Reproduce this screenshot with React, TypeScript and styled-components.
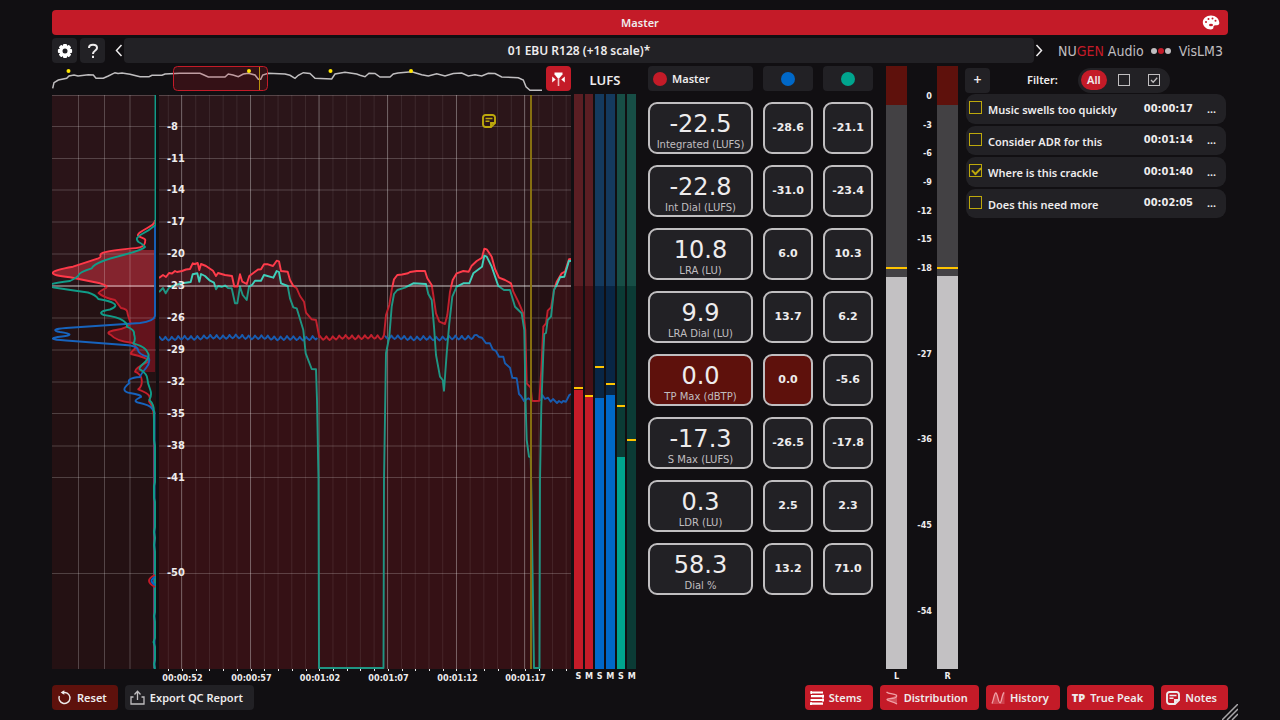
import React from 'react';
import styled, { createGlobalStyle } from 'styled-components';

const c = {
  bg: '#110f12',
  panel: '#222125',
  red: '#c41b28',
  darkRed: '#5e110c',
  blue: '#0068c8',
  green: '#00a58e',
  text: '#eeeced',
  soft: '#c0bec0',
  yellow: '#ffc400',
  olive: '#bda80c',
};

const digits = "'DejaVu Sans Condensed', 'DejaVu Sans', sans-serif";
const wideDigits = "'DejaVu Sans', sans-serif";

const GlobalStyle = createGlobalStyle`
  * { box-sizing: border-box; }
  body {
    margin: 0;
    background: ${c.bg};
    color: ${c.text};
    font-family: 'Noto Sans', 'Open Sans', sans-serif;
    font-size: 11px;
    line-height: 16px;
    font-weight: 600;
  }
  button, input { font: inherit; color: inherit; margin: 0; }
  svg { display: block; }
`;

const Page = styled.main`
  position: relative;
  display: flex;
  flex-direction: column;
  gap: 3px;
  min-height: 100vh;
  padding: 10px 52px;
`;

const MasterBar = styled.header`
  display: grid;
  grid-template-columns: 1fr auto 1fr;
  align-items: center;
  height: 25px;
  padding: 0 8px;
  border-radius: 4px;
  background: ${c.red};
`;

const Title = styled.h1`
  grid-column: 2;
  margin: 0;
  font-size: 11px;
  line-height: 16px;
  font-weight: 600;
`;

const PlainButton = styled.button`
  display: flex;
  align-items: center;
  justify-content: center;
  padding: 0;
  border: 0;
  background: none;
`;

const PaletteButton = styled(PlainButton)`
  justify-self: end;
`;

const Toolbar = styled.nav`
  display: flex;
  align-items: center;
  height: 25px;
`;

const SquareButton = styled(PlainButton)<{ $color?: string }>`
  flex: none;
  width: 25px;
  height: 25px;
  border-radius: 4px;
  background: ${(p) => p.$color ?? c.panel};
  font-size: 14px;
`;

const ToolGroup = styled.div`
  display: flex;
  gap: 3px;
  margin-right: 9px;
`;

const ArrowButton = styled(PlainButton)`
  width: 10px;
  height: 25px;
`;

const PresetButton = styled(PlainButton)`
  flex: 1;
  height: 25px;
  border-radius: 4px;
  background: ${c.panel};
  font-size: 12px;
`;

const Brand = styled.div`
  display: flex;
  align-items: center;
  justify-content: space-between;
  width: 184px;
  padding: 0 5px 0 14px;
  color: ${c.soft};
  font-family: ${digits};
  font-size: 14px;
  font-weight: 400;
  white-space: nowrap;

  b { color: ${c.red}; font-weight: 400; }
`;

const BrandDots = styled.span`
  display: flex;
  gap: 1px;
`;

const Body = styled.div`
  flex: 1;
  display: flex;
  min-height: 618px;
`;

const Visuals = styled.section`
  flex: 1;
  display: grid;
  grid-template-columns: 104px 1fr;
  grid-template-rows: 25px 1fr 15px;
  column-gap: 3px;
  min-width: 0;
`;

const OverviewRow = styled.div`
  grid-column: 1 / -1;
  display: flex;
  gap: 4px;
  min-width: 0;
`;

const Overview = styled.div`
  flex: 1;
  min-width: 0;
  svg { width: 100%; height: 25px; }
`;

const Plot = styled.div`
  position: relative;
  min-height: 0;
  margin-top: 4px;
  > svg { position: absolute; inset: 0; width: 100%; height: 100%; }
`;

const LevelLabel = styled.span`
  position: absolute;
  left: 8px;
  transform: translateY(-50%);
  font-family: ${digits};
  font-weight: 700;
`;

const NoteMarker = styled(PlainButton)`
  position: absolute;
  left: 78.5%;
  top: 3.3%;
  color: ${c.olive};
`;

const TimeAxis = styled.div`
  grid-column: 2;
  position: relative;
  font-family: ${digits};
  font-size: 9px;
  font-weight: 700;
`;

const Tick = styled.i`
  position: absolute;
  top: 0;
  width: 1px;
  height: 2px;
  background: ${c.text};
`;

const TimeLabel = styled.span`
  position: absolute;
  top: 1px;
  transform: translateX(-50%);
`;

const LoudnessMeter = styled.section`
  display: grid;
  grid-template-rows: 28px 1fr 15px;
  width: 62px;
  margin-left: 3px;
`;

const MeterTitle = styled.h2`
  margin: 0;
  padding-top: 5px;
  text-align: center;
  font-size: 13px;
  line-height: 18px;
  font-weight: 600;
`;

const LoudnessBars = styled.div`
  display: grid;
  grid-template-columns: repeat(6, 1fr);
  column-gap: 2px;
`;

const Bar = styled.div<{ $top: string; $low: string }>`
  position: relative;
  background: linear-gradient(${(p) => p.$top} 0 33.4%, ${(p) => p.$low} 33.4%);
`;

const Fill = styled.div<{ $color: string }>`
  position: absolute;
  left: 0;
  right: 0;
  bottom: 0;
  background: ${(p) => p.$color};
`;

const Peak = styled.div`
  position: absolute;
  left: 0;
  right: 0;
  height: 2px;
  background: ${c.yellow};
`;

const BarNames = styled(LoudnessBars)`
  font-family: ${digits};
  font-size: 9px;
  line-height: 15px;
  font-weight: 700;
  text-align: center;
`;

const Readouts = styled.section`
  display: grid;
  grid-template-columns: 105px 50px 50px;
  grid-template-rows: 25px;
  grid-auto-rows: 52px;
  gap: 11px 10px;
  align-content: start;
  margin-left: 12px;
`;

const StemButton = styled.button<{ $wide?: boolean }>`
  display: flex;
  align-items: center;
  justify-content: ${(p) => (p.$wide ? 'flex-start' : 'center')};
  gap: 5px;
  padding: 0 5px;
  border: 0;
  border-radius: 4px;
  background: ${c.panel};
`;

const Dot = styled.i<{ $color: string; $size: number }>`
  width: ${(p) => p.$size}px;
  height: ${(p) => p.$size}px;
  border-radius: 50%;
  background: ${(p) => p.$color};
`;

const Cell = styled.div<{ $alert?: boolean }>`
  display: flex;
  flex-direction: column;
  align-items: center;
  justify-content: center;
  border: 2px solid ${c.soft};
  border-radius: 9px;
  background: ${(p) => (p.$alert ? c.darkRed : c.panel)};
  font-family: ${wideDigits};
  font-weight: 700;
`;

const MainCell = styled(Cell)`
  padding-top: 5px;
  font-weight: 400;
`;

const BigValue = styled.strong`
  font-size: 24px;
  line-height: 28px;
  font-weight: 400;
`;

const Caption = styled.span`
  color: ${c.soft};
  font-size: 10px;
  line-height: 14px;
`;

const PeakMeter = styled.section`
  display: grid;
  grid-template-columns: 21px 1fr 21px;
  grid-template-rows: 1fr 15px;
  width: 72px;
  margin-left: 13px;
  font-family: ${digits};
  font-size: 9px;
  line-height: 15px;
  font-weight: 700;
  text-align: center;
`;

const PeakBar = styled.div`
  position: relative;
  background: linear-gradient(${c.darkRed} 0 39px, #434144 39px);
`;

const PeakScale = styled.div`
  position: relative;
`;

const PeakLabel = styled.span`
  position: absolute;
  right: 5px;
  transform: translateY(-50%);
`;

const Notes = styled.section`
  width: 263px;
  margin-left: 7px;
`;

const NotesHead = styled.div`
  display: flex;
  align-items: center;
  height: 28px;
`;

const FilterLabel = styled.span`
  margin: 0 20px 0 37px;
`;

const FilterGroup = styled.div`
  display: flex;
  align-items: center;
  gap: 4px;
  width: 92px;
  height: 25px;
  padding: 0 3px;
  border-radius: 13px;
  background: ${c.panel};
`;

const FilterButton = styled(PlainButton)<{ $active?: boolean }>`
  width: 26px;
  height: 20px;
  border-radius: 10px;
  color: ${(p) => (p.$active ? c.text : c.soft)};
  background: ${(p) => (p.$active ? c.red : 'none')};
`;

const NoteList = styled.ul`
  display: grid;
  grid-auto-rows: 1fr;
  gap: 2px;
  height: 124px;
  margin: 0 2px 0 1px;
  padding: 0;
  list-style: none;
`;

const NoteRow = styled.li`
  display: flex;
  align-items: center;
  padding: 0 10px 0 3px;
  border-radius: 9px;
  background: ${c.panel};
`;

const NoteName = styled.label`
  flex: 1;
  display: flex;
  align-items: flex-end;
  gap: 6px;
  span { line-height: 12px; }
`;

const NoteTime = styled.time`
  font-family: ${digits};
  font-weight: 700;
`;

const Check = styled.input`
  position: relative;
  appearance: none;
  width: 13px;
  height: 13px;
  margin-bottom: 2px;
  border: 1px solid ${c.olive};

  &:checked::after {
    content: '';
    position: absolute;
    left: 2px;
    top: 2px;
    width: 7px;
    height: 4px;
    border: solid ${c.olive};
    border-width: 0 0 2px 2px;
    transform: rotate(-45deg);
  }
`;

const MoreButton = styled(PlainButton)`
  width: 9px;
  margin-left: 14px;
`;

const Footer = styled.footer`
  display: flex;
  align-items: center;
  gap: 7px;
  height: 25px;
  margin-top: -2px;
`;

const ActionButton = styled.button<{ $color: string }>`
  display: flex;
  align-items: center;
  gap: 5px;
  height: 25px;
  padding: 0 11px 0 5px;
  border: 0;
  border-radius: 4px;
  background: ${(p) => p.$color};
`;

const Spacer = styled.div`
  flex: 1;
`;

const Grip = styled.svg`
  position: absolute;
  right: 42px;
  bottom: 0;
`;

const levels: [number, number][] = [
  [-8, 126.5], [-11, 158.5], [-14, 190], [-17, 222], [-20, 254], [-23, 286],
  [-26, 318], [-29, 350], [-32, 382], [-35, 413.5], [-38, 446], [-41, 477.5], [-50, 573.5],
];

const ripple = (from: number, to: number, y: number) => {
  const pts: string[] = [];
  for (let x = from, i = 0; x < to; x += 1.6, i += 1) {
    const drift = Math.sin(x / 21) * 0.8 + Math.sin(x / 4.3) * 0.4;
    const wave = [-2, 0.2, 1.6, 0.4][i % 4];
    pts.push(`${x.toFixed(1)},${(y + drift + wave).toFixed(1)}`);
  }
  return pts.join(' ');
};

const redA =
  '159,278 163,275 166,277 169,273 172,273.500 175,271 177,272 182,271 186,269.500 190,269 192.700,263.300 195,264 197.700,263 199.300,270 201,264 206,266 213,270.700 216,276 218,273 225,275 232,276 234.300,286.700 237.300,286.700 240,274.300 242.300,281.700 246.700,284 249.300,276 252,274 255,271.700 258,269.500 261,269.300 264,264.300 268,264.300 273,266 276.700,260.700 279,261.300 281,271 287.700,271.700 290,280 293.300,286 296.700,288.300 300,296 304,301.700 306,312.700 311.700,319.300 316,320 319.300,337';
const redB =
  '384,335 386,315 389.300,305 391.700,290 394,279.300 397.300,275 402,274.500 408,273.300 410,272 416.700,271 425,271 427.300,278.300 431.700,285 433.300,295 436,313.300 439.300,321.700 445,324 447.300,315 450,291.700 452.700,280 456.700,273.300 463.300,271 468.700,271.700 471.700,265.700 476.700,261 482,257.700 484.300,248.700 486.700,249.300 491.700,256.700 495,269 499,277.700 505,280 511,283.300 513.300,291.700 518.300,301.700 523.300,313.300 525.300,330 526.700,383.300 530.700,387.700 532,400.700 535,401 539.300,400.700 541.300,370 543.300,326.700 546,323.300 547.700,310.700 551,307.300 554,290 556.700,281.700 561.700,273.300 565,271.700 569,259.300 571,259';
const redLine = `${redA} ${ripple(320, 383, 338)} ${redB}`;
const greenLine =
  '159,292 163,288 165.700,293.300 169,287.700 175,285 182,283.300 190.700,282 192.700,274.300 197.300,273.300 199.300,281.700 201,274 205,276 210,280.700 214,282.700 216,289.300 218.300,286 222,287 225,285.500 228,288 231.700,288.300 235,303.300 237.300,303.300 240,286.700 242.700,295 246.700,300 249,286.700 252,285 255,280.700 261,280.700 264,275 273.300,277.700 276.700,271 279,272 281,283.300 287.700,286 290,298.300 293.300,307.300 296.700,308.300 300,319 303.300,330 305.700,353.300 311.700,369 316,369.300 317,400 318.500,480 319,668 383.500,668 384,480 386,353.300 389.300,336.700 391.700,306.700 394,294 397.300,290 405,287.700 413.300,283.300 426,284 428.300,294 431.700,300 434,326.700 436,355 440,376.700 442.700,380 444,390.700 446.700,353.300 449.300,323.300 452.300,296.700 456.700,286.700 463.300,283.300 469.300,283.300 473.300,273.300 482,266.700 484.300,255.700 486.700,256.700 491.700,266.700 498.300,286 504,290 510,290 515,306.700 521.700,313.300 524.300,330 525.700,406.700 526.700,440 529,456.700 530.700,457.300 531.500,500 534,668 539.500,668 540,480 541.300,406.700 543.300,353 544.300,334 546,333 547.700,320 551,316.700 554,290 556.700,285 560,277.300 564.300,276.700 569,260.700 571,261';
const blueA = ripple(159, 319, 337.7);
const blueB = `${ripple(385, 476, 337.7)} 476.700,335 479,337 482,337.700 486,343.300 490,343.300 492.700,349.300 496,351 499,356.700 503.300,356.700 505,363.300 510,367.700 512.300,377.700 516.700,378.300 519,394 521,396 524,401 528.300,398.300 531.700,400.700`;
const blueC = '541,401 542.300,395 545,399 548,397.700 550.700,401.700 553,399 555,401 557,403 559,401 561.700,402.700 563,401 566,401.700 569.300,395 571,394';

const distRed =
  'M155 220C155 225 150 226 141 231.700S145.300 237 145.300 240S145 246 140 247.300S110 250 103.300 252.700S104 256 98.300 258.300L73 266.700Q34 273.500 70 277.300L100 283.300Q110 286 105 288.500T98.500 293Q104 298 115 300Q118 304 121 308Q127 309 127.300 312T130.700 323.300Q128 328 116 330T111 335Q116 341 131.700 342.700Q138 346 134 349.500T131 354Q149 358 148.300 361.700S135 368 135 371.700Q141 374 141.700 380T138.300 389.300Q148 393 149.300 396T149 401.700Q154 407 154 420V668';
const distGreen =
  'M155.500 95V225Q150 230 142 234T138.500 242Q144 245 145 247Q142 250 125 254.500T103 261Q93 265 91.700 268.300Q80 272 79 274.500T70 281Q38 285 54 287.500T88 292.500Q96 295 98.300 299Q110 301 113 303Q119 306 110 309.500Q96 312 104 315Q118 317 123.300 320.700Q128 324 126.700 326.700Q135 330 134 334Q136 340 133.300 343.300Q146 347 147.300 352Q151 357 144 363T141 370Q147 374 147.300 378.500T150 389T149.300 400Q154 404 154 412L154 440L155 446V482L154 486V498L155 502V527L154 532L155 538L154 545L155 552V612L154 616L155 622V638L153.500 642L155 647V660L154 664L155 669';
const distBlue =
  'M155 226V316Q154 321 140 323L66 328Q48 329.500 60 332Q78 334.500 62 336.500Q42 339 66 340.500L125 345Q138 346 138 350T148.300 357Q151 362 146 368T140 377Q126 378 129.500 383Q119 391 130 393Q142 395 141 397Q132 401 138 402.500Q150 405 152 408.500L154.500 412V669';

const overviewLine =
  '52.700,88.300 54,82.700 58.300,80 66.700,78.300 69,76 74,75 78,76 88.300,74.700 93.300,75 96,78.300 103.300,78.300 108.300,76 115,72.700 118,73.500 122,73 130,74.300 140,76.700 149,76.700 152,75.300 162,75.300 165,74 180,73.300 200,73.300 204,75 208.300,77 225,77 228.300,74 233,75 238.300,76.700 243.300,74 248.300,73.300 255,75 258.300,79.300 260.700,79.300 262.700,75 268.300,73.300 285,74 290,75.300 295,78.300 298.300,75.300 303.300,72.700 310,73.500 315,78.300 331.700,79 335,74 345,72.300 356.700,74 360,75.300 365,76.700 369,73.300 375,73.500 380,77 390,77 393.300,74 398,73 411.700,71.700 421.700,74.700 428.300,76 436.700,73.700 445,76 453.300,73.500 461.700,73 468.300,76 475,74.700 481.700,76 488.300,73.300 495,73.500 501.700,77 518.300,77.700 523.300,80 526,86.700 530,90.300 542.700,90.300';

const majors = [181.5, 250.5, 319, 387.5, 456.5, 524.5];
const ticks = Array.from({ length: 30 }, (_, i) => 168.3 + i * 13.72);

const times = ['00:00:52', '00:00:57', '00:01:02', '00:01:07', '00:01:12', '00:01:17'];

const meters = [
  { name: 'S', top: '#5a1e23', low: '#451116', color: c.red, fill: 390, peak: 388 },
  { name: 'M', top: '#5a1e23', low: '#451116', color: c.red, fill: 396, peak: 396 },
  { name: 'S', top: '#143a5e', low: '#092645', color: c.blue, fill: 398, peak: 368 },
  { name: 'M', top: '#143a5e', low: '#092645', color: c.blue, fill: 395, peak: 384 },
  { name: 'S', top: '#174e46', low: '#0b3b35', color: c.green, fill: 457, peak: 406 },
  { name: 'M', top: '#174e46', low: '#0b3b35', color: c.green, fill: 669, peak: 440 },
];

const readouts = [
  { value: '-22.5', name: 'Integrated (LUFS)', a: '-28.6', b: '-21.1' },
  { value: '-22.8', name: 'Int Dial (LUFS)', a: '-31.0', b: '-23.4' },
  { value: '10.8', name: 'LRA (LU)', a: '6.0', b: '10.3' },
  { value: '9.9', name: 'LRA Dial (LU)', a: '13.7', b: '6.2' },
  { value: '0.0', name: 'TP Max (dBTP)', a: '0.0', b: '-5.6', alert: true },
  { value: '-17.3', name: 'S Max (LUFS)', a: '-26.5', b: '-17.8' },
  { value: '0.3', name: 'LDR (LU)', a: '2.5', b: '2.3' },
  { value: '58.3', name: 'Dial %', a: '13.2', b: '71.0' },
];

const peakScale = [0, -3, -6, -9, -12, -15, -18, -27, -36, -45, -54];

const notes = [
  { text: 'Music swells too quickly', time: '00:00:17', done: false },
  { text: 'Consider ADR for this', time: '00:01:14', done: false },
  { text: 'Where is this crackle', time: '00:01:40', done: true },
  { text: 'Does this need more', time: '00:02:05', done: false },
];

const pct = (y: number) => `${((y - 95) / 574) * 100}%`;
const across = (x: number) => `${((x - 159) / 412) * 100}%`;

const NoteIcon = ({ size = 14 }: { size?: number }) => (
  <svg width={size} height={size} viewBox="0 0 14 14" fill="none" stroke="currentColor" strokeWidth="1.900">
    <path d="M9 13H3.500A2.500 2.500 0 0 1 1 10.500V3.500A2.500 2.500 0 0 1 3.500 1H10.500A2.500 2.500 0 0 1 13 3.500V9L9 13V9H13" />
    <path d="M3.500 4.500H10.500M3.500 7.300H7.500" strokeWidth="1.400" />
  </svg>
);

const GearIcon = () => (
  <svg width="16" height="16" viewBox="0 0 16 16">
    <g fill="#fff">
      {[0, 45, 90, 135].map((a) => (
        <rect key={a} x="6" y="0.900" width="4" height="14.200" rx="1" transform={`rotate(${a} 8 8)`} />
      ))}
      <circle cx="8" cy="8" r="5.700" />
    </g>
    <circle cx="8" cy="8" r="2.500" fill={c.panel} />
  </svg>
);

const PaletteIcon = () => (
  <svg width="18" height="15" viewBox="0 0 18 15">
    <path fill="#fff" d="M9 .5C4.300.500.800 3.500.800 7.300c0 4 3.600 7.200 8 7.200 1.900 0 2.700-.8 2.600-1.900-.1-1.500.7-2.300 2.100-2.300h1.600c1.500 0 2.300-.9 2.200-2.500C17 3.500 13.600.500 9 .5z" />
    <g fill={c.red}>
      <circle cx="4" cy="7" r="1" />
      <circle cx="6.500" cy="4" r="1" />
      <circle cx="10.500" cy="3.500" r="1" />
      <circle cx="13.500" cy="5.800" r="1" />
      <ellipse cx="9" cy="10" rx="2" ry="1.200" />
    </g>
  </svg>
);

const Chevron = ({ right }: { right?: boolean }) => (
  <svg width="8" height="13" viewBox="0 0 8 13" fill="none" stroke={c.text} strokeWidth="1.500">
    <path d={right ? 'M1.500 1L6.500 6.500L1.500 12' : 'M6.500 1L1.500 6.500L6.500 12'} />
  </svg>
);

const BoxIcon = ({ checked }: { checked?: boolean }) => (
  <svg width="12" height="12" viewBox="0 0 12 12" fill="none" stroke="currentColor">
    <rect x="0.500" y="0.500" width="11" height="11" />
    {checked && <path d="M3 6L5.200 8.200L9.200 3.800" strokeWidth="1.300" />}
  </svg>
);

const LineSplit = ({ id, top, low }: { id: string; top: string; low: string }) => (
  <linearGradient id={id} gradientUnits="userSpaceOnUse" x1="0" x2="0" y1="95" y2="669">
    <stop offset="0.334" stopColor={top} />
    <stop offset="0.334" stopColor={low} />
  </linearGradient>
);

const GridLines = ({ from, to }: { from: number; to: number }) => (
  <g stroke="#fff">
    <path d={`M${from} 95.500H${to}`} opacity="0.200" />
    {levels.map(([v, y]) => (
      <path
        key={v}
        d={`M${from} ${y}H${to}`}
        opacity={v === -23 ? 0.5 : 0.2}
        strokeWidth={v === -23 ? 1.5 : 1.2}
      />
    ))}
  </g>
);

const Distribution = () => (
  <svg viewBox="52 95 104 574" preserveAspectRatio="none" role="img" aria-label="Loudness distribution">
    <defs>
      <LineSplit id="dr" top="#ff3848" low="#c41f2c" />
      <LineSplit id="dfill" top="#84242e" low="#63131c" />
      <clipPath id="range"><rect x="52" y="250" width="104" height="122" /></clipPath>
    </defs>
    <rect x="52" y="95" width="104" height="191" fill="#2a1418" />
    <rect x="52" y="286" width="104" height="383" fill="#241113" />
    <path d={`${distRed}H155V220Z`} fill="url(#dfill)" clipPath="url(#range)" />
    <GridLines from={52} to={156} />
    <path d="M78.500 95V669M104.500 95V669M130 95V669" stroke="#fff" opacity="0.220" />
    <g fill="none" strokeWidth="1.900" strokeLinejoin="round">
      <path d={distRed} stroke="url(#dr)" />
      <path d={distBlue} stroke="#1763bd" />
      <path d={distGreen} stroke="#109c88" />
      <path d="M155 575Q143 580.500 155 587" stroke={c.red} />
      <path d="M155 577Q148 580.500 155 585" stroke={c.blue} />
    </g>
  </svg>
);

const History = () => (
  <svg viewBox="159 95 412 574" preserveAspectRatio="none" role="img" aria-label="Loudness history">
    <defs>
      <LineSplit id="hr" top="#ff3b4a" low="#c1202d" />
      <LineSplit id="hg" top="#3fcfba" low="#1f9583" />
      <LineSplit id="hfill" top="#42171e" low="#351115" />
    </defs>
    <rect x="159" y="95" width="412" height="191" fill="#2b1519" />
    <rect x="159" y="286" width="412" height="383" fill="#231013" />
    <polygon points={`${redLine} 571,669 159,669`} fill="url(#hfill)" />
    <GridLines from={159} to={571} />
    <g stroke="#fff">
      {ticks.map((x) => <path key={x} d={`M${x} 95V669`} opacity="0.080" />)}
      {majors.map((x) => <path key={x} d={`M${x} 95V669`} opacity="0.280" />)}
    </g>
    <g fill="none" strokeWidth="1.900" strokeLinejoin="round">
      <polyline points={blueA} stroke="#185cb0" />
      <polyline points={blueB} stroke="#185cb0" />
      <polyline points={blueC} stroke="#185cb0" />
      <polyline points={redLine} stroke="url(#hr)" />
      <polyline points={greenLine} stroke="url(#hg)" />
    </g>
    <path d="M531 95V669" stroke="#8b7410" strokeWidth="1.900" />
  </svg>
);

const Timeline = () => (
  <svg viewBox="52 66 490 25" preserveAspectRatio="none" role="img" aria-label="Programme overview">
    <polyline points={overviewLine} fill="none" stroke="#c0bec0" strokeWidth="1.500" />
    <rect x="173.500" y="66.500" width="94" height="24" rx="4" fill="#c41b28" fillOpacity="0.200" stroke={c.red} />
    <path d="M259.500 67V90" stroke="#b9920c" />
    {[68.5, 249, 330.5, 411].map((x) => <circle key={x} cx={x} cy="71" r="2" fill="#ffe600" />)}
  </svg>
);

const ResetIcon = () => (
  <svg width="15" height="15" viewBox="0 0 15 15" fill="none" stroke={c.text} strokeWidth="1.400">
    <path d="M5 2.500H8A5.500 5.500 0 1 1 2.300 6" />
    <path d="M7.300.3L3.600 2.500L7.300 4.700Z" fill={c.text} stroke="none" />
  </svg>
);

const ExportIcon = () => (
  <svg width="15" height="15" viewBox="0 0 15 15" fill="none" stroke={c.soft} strokeWidth="1.300">
    <path d="M3.500 7H1V14H14V7H11.500M7.500 10V1.500M4.500 4.500L7.500 1.300L10.500 4.500" />
  </svg>
);

const StemsIcon = () => (
  <svg width="14" height="14" viewBox="0 0 14 14" stroke="#fff" strokeWidth="2.200">
    <path d="M.5 1.500H13M1 5.200H13M.5 9H13M1 12.700H13" />
    <path d="M.5 1.500H2M12 5.200H14M12 9H14M0 12.700H2" strokeWidth="3" />
  </svg>
);

const DistributionIcon = () => (
  <svg width="14" height="14" viewBox="0 0 14 14" fill="none" stroke="#f0a0a6" strokeWidth="1.300">
    <path d="M12 1C13.500 6 2 7 2 8.500S9 11 12 13.500Z" fill="#dc6972" stroke="none" opacity="0.700" />
    <path d="M1.500 1C4 3.500 13 2.500 11.500 5.500S2 7 2 8.500S9 10.500 12 13" />
  </svg>
);

const HistoryIcon = () => (
  <svg width="14" height="14" viewBox="0 0 14 14" fill="none" stroke="#f0a0a6" strokeWidth="1.300">
    <path d="M1 13L4 3H6L8 13ZM9 13L12 2H13.500V13Z" fill="#dc6972" stroke="none" opacity="0.500" />
    <path d="M.8 12.500C2.500 11 3 2 4.800 2S7.300 12 9 12S11 2 13.300 1.500" />
  </svg>
);

const LinkIcon = () => (
  <svg width="15" height="16" viewBox="0 0 15 16" fill="#fff">
    <path d="M3.500 1.500H11.500V3.500L8.500 7H6.500L3.500 3.500Z" />
    <path d="M6.700 7H8.300V15H6.700Z" fill="#f0c0c4" />
    <path d="M1.200 5.500L4.700 8.500L1.200 11.500ZM13.800 5.500L10.300 8.500L13.800 11.500Z" />
  </svg>
);

export default function App() {
  return (
    <>
      <GlobalStyle />
      <Page>
        <MasterBar>
          <Title>Master</Title>
          <PaletteButton aria-label="Colours"><PaletteIcon /></PaletteButton>
        </MasterBar>

        <Toolbar>
          <ToolGroup>
            <SquareButton aria-label="Settings"><GearIcon /></SquareButton>
            <SquareButton aria-label="Help">
              <svg width="12" height="16" viewBox="0 0 12 16" fill="none" stroke={c.text} strokeWidth="2">
                <path d="M2 5C2 .8 10 .8 10 5C10 7.500 6 7.500 6 11M6 12.800V15" />
              </svg>
            </SquareButton>
          </ToolGroup>
          <ArrowButton aria-label="Previous preset"><Chevron /></ArrowButton>
          <PresetButton>01 EBU R128 (+18 scale)*</PresetButton>
          <ArrowButton aria-label="Next preset"><Chevron right /></ArrowButton>
          <Brand>
            <span>NU<b>GEN</b> Audio</span>
            <BrandDots>
              <Dot $color={c.soft} $size={6} />
              <Dot $color={c.red} $size={6} />
              <Dot $color={c.soft} $size={6} />
            </BrandDots>
            <span>VisLM3</span>
          </Brand>
        </Toolbar>

        <Body>
          <Visuals>
            <OverviewRow>
              <Overview><Timeline /></Overview>
              <SquareButton $color={c.red} aria-label="Follow playhead"><LinkIcon /></SquareButton>
            </OverviewRow>
            <Plot><Distribution /></Plot>
            <Plot>
              <History />
              {levels.map(([v, y]) => (
                <LevelLabel key={v} style={{ top: pct(y) }}>{v}</LevelLabel>
              ))}
              <NoteMarker aria-label="Note marker"><NoteIcon /></NoteMarker>
            </Plot>
            <TimeAxis>
              {ticks.map((x) => <Tick key={x} style={{ left: across(x) }} />)}
              {times.map((t, i) => (
                <TimeLabel key={t} style={{ left: across(majors[i] + 1) }}>{t}</TimeLabel>
              ))}
            </TimeAxis>
          </Visuals>

          <LoudnessMeter>
            <MeterTitle>LUFS</MeterTitle>
            <LoudnessBars>
              {meters.map((m, i) => (
                <Bar key={i} $top={m.top} $low={m.low}>
                  <Fill $color={m.color} style={{ top: pct(m.fill) }} />
                  <Peak style={{ top: pct(m.peak - 1) }} />
                </Bar>
              ))}
            </LoudnessBars>
            <BarNames>
              {meters.map((m, i) => <span key={i}>{m.name}</span>)}
            </BarNames>
          </LoudnessMeter>

          <Readouts>
            <StemButton $wide><Dot $color={c.red} $size={14} />Master</StemButton>
            <StemButton aria-label="Blue stem"><Dot $color={c.blue} $size={14} /></StemButton>
            <StemButton aria-label="Green stem"><Dot $color={c.green} $size={14} /></StemButton>
            {readouts.map((r) => (
              <React.Fragment key={r.name}>
                <MainCell $alert={r.alert}>
                  <BigValue>{r.value}</BigValue>
                  <Caption>{r.name}</Caption>
                </MainCell>
                <Cell $alert={r.alert}>{r.a}</Cell>
                <Cell>{r.b}</Cell>
              </React.Fragment>
            ))}
          </Readouts>

          <PeakMeter>
            <PeakBar>
              <Fill $color="#c3c1c3" style={{ top: '35%' }} />
              <Peak style={{ top: '33.4%' }} />
            </PeakBar>
            <PeakScale>
              {peakScale.map((v) => (
                <PeakLabel key={v} style={{ top: `${5 - v * 1.581}%` }}>{v}</PeakLabel>
              ))}
            </PeakScale>
            <PeakBar>
              <Fill $color="#c3c1c3" style={{ top: '34.8%' }} />
              <Peak style={{ top: '33.3%' }} />
            </PeakBar>
            <span>L</span>
            <span />
            <span>R</span>
          </PeakMeter>

          <Notes>
            <NotesHead>
              <SquareButton aria-label="Add note">+</SquareButton>
              <FilterLabel>Filter:</FilterLabel>
              <FilterGroup>
                <FilterButton $active>All</FilterButton>
                <FilterButton aria-label="Open notes"><BoxIcon /></FilterButton>
                <FilterButton aria-label="Completed notes"><BoxIcon checked /></FilterButton>
              </FilterGroup>
            </NotesHead>
            <NoteList>
              {notes.map((n) => (
                <NoteRow key={n.text}>
                  <NoteName>
                    <Check type="checkbox" defaultChecked={n.done} />
                    <span>{n.text}</span>
                  </NoteName>
                  <NoteTime>{n.time}</NoteTime>
                  <MoreButton aria-label="Note options">...</MoreButton>
                </NoteRow>
              ))}
            </NoteList>
          </Notes>
        </Body>

        <Footer>
          <ActionButton $color={c.darkRed}><ResetIcon />Reset</ActionButton>
          <ActionButton $color={c.panel}><ExportIcon />Export QC Report</ActionButton>
          <Spacer />
          <ActionButton $color={c.red}><StemsIcon />Stems</ActionButton>
          <ActionButton $color={c.red}><DistributionIcon />Distribution</ActionButton>
          <ActionButton $color={c.red}><HistoryIcon />History</ActionButton>
          <ActionButton $color={c.red}><b>TP</b>True Peak</ActionButton>
          <ActionButton $color={c.red}><NoteIcon />Notes</ActionButton>
        </Footer>
        <Grip width="16" height="16" viewBox="0 0 16 16" stroke="#a9a7a9" strokeWidth="1.500" aria-hidden="true">
          <path d="M0 16L16 0M5 16L16 5M10 16L16 10" />
        </Grip>
      </Page>
    </>
  );
}
